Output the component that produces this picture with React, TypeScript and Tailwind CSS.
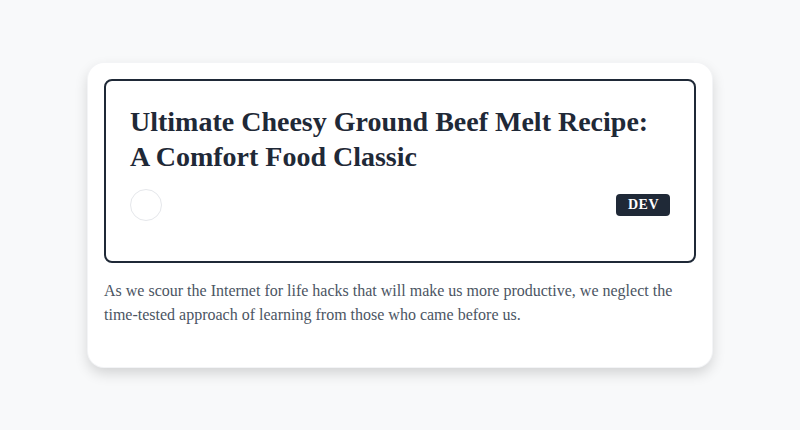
import React from 'react';

export default function App() {
  return (
    <div className="min-h-screen w-full bg-[#f8f9fa] flex justify-center items-start pt-[63px]" style={{ fontFamily: '"Liberation Serif", "Times New Roman", serif' }}>
      <div className="w-[624px] bg-white rounded-2xl shadow-[0_6px_14px_rgba(0,0,0,0.16)] ring-1 ring-gray-100 px-4 pt-4 pb-10">
        {/* Title block */}
        <div className="border-2 border-[#1f2937] rounded-lg px-6 pt-[23px] pb-10">
          <h1 className="text-[28px] leading-[35px] font-bold text-[#1f2937]">
            Ultimate Cheesy Ground Beef Melt Recipe:<br />A Comfort Food Classic
          </h1>
          <div className="mt-[15px] flex items-center justify-between">
            <div className="w-8 h-8 rounded-full border border-gray-200 bg-white" />
            <span className="h-[22px] flex items-center bg-[#1f2937] text-white text-[14px] leading-none font-bold tracking-[0.5px] pl-3 pr-[11px] rounded">DEV</span>
          </div>
        </div>
        <p className="mt-4 text-base leading-6 text-[#4b5563]">
          As we scour the Internet for life hacks that will make us more productive, we neglect the time-tested approach of learning from those who came before us.
        </p>
      </div>
    </div>
  );
}
